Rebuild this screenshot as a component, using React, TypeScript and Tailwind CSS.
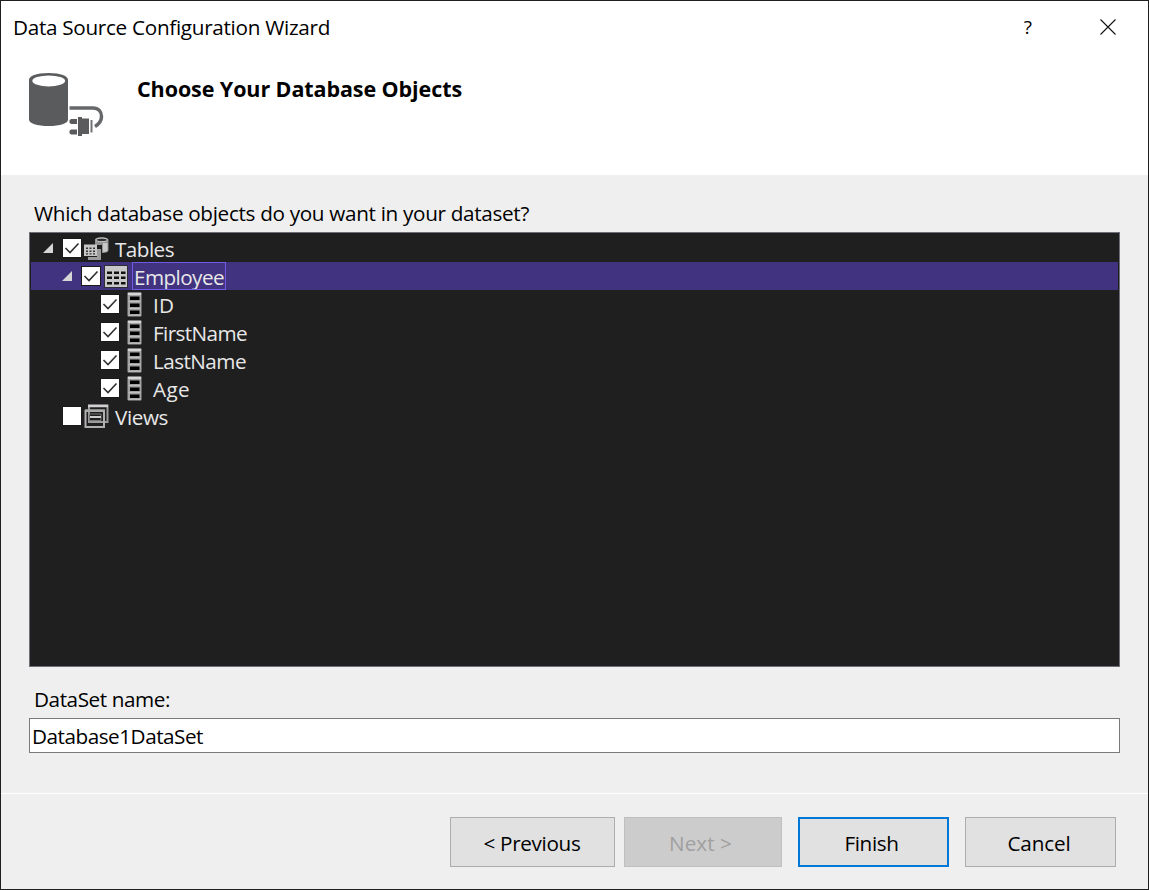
import React from "react";

type IconKind = "tables" | "table" | "column" | "views";

function Txt({ children, className = "", w }: { children: string; className?: string; w: number }) {
  const ref = React.useRef<HTMLSpanElement>(null);
  React.useLayoutEffect(() => {
    const el = ref.current;
    if (!el) return;
    el.style.letterSpacing = "0px";
    const natural = el.getBoundingClientRect().width;
    el.style.letterSpacing = `${(w - natural) / children.length}px`;
  }, [children, w]);
  return (
    <span ref={ref} className={`inline-block shrink-0 whitespace-pre ${className}`}>
      {children}
    </span>
  );
}

function DatabaseIcon() {
  return (
    <svg width="80" height="70" viewBox="26 70 80 70" fill="none" className="block">
      <path d="M29 80C29 76 36 73 48.500 73S68 76 68 80V119.500C68 123.500 60 126 48.500 126S29 123.500 29 119.500Z" fill="#595b5d" />
      <ellipse cx="48.700" cy="80.900" rx="16.400" ry="5.500" fill="#fff" />
      <path d="M69.500 108H93C98.500 108 101.500 111.500 101.500 116.500C101.500 121 99 124 95 126.500" stroke="#66686a" strokeWidth="3.500" />
      <path d="M71 119H77V124H71L69.500 122.700V120.300ZM71 129.500H77V134.500H71L69.500 133.200V130.800Z" fill="#595b5d" />
      <path d="M78 117H82V118.500H89V134H82V136H78Z" fill="#595b5d" />
      <path d="M91.500 120V132.500" stroke="#707274" strokeWidth="2" />
    </svg>
  );
}

function NodeIcon({ kind }: { kind: IconKind }) {
  if (kind === "column") {
    return (
      <svg width="15" height="25" viewBox="0 0 15 25" className="block">
        <rect x=".5" y=".3" width="14" height="24.200" rx="1" fill="#a3a3a3" />
        <rect x="1" y="1" width="13" height="2" fill="#d8d5d8" />
        <path d="M3 4.500H12.500V8H3ZM3 11.500H12.500V15H3ZM3 18.500H12.500V22H3Z" fill="#000" />
        <path d="M1.500 9.500H13.500M1.500 16.500H13.500M1.500 23.300H13.500" stroke="#c0c0c0" strokeWidth="1" />
      </svg>
    );
  }
  if (kind === "table") {
    return (
      <svg width="24" height="24" viewBox="0 0 24 24" className="block">
        <rect width="24" height="23" fill="#302c35" />
        <rect x="1" y="1" width="22" height="21" fill="#c8c8c8" />
        <path d="M3 6.500H8V9H3ZM10 6.500H15V9H10ZM17 6.500H21.500V9H17ZM3 11.500H8V14H3ZM10 11.500H15V14H10ZM17 11.500H21.500V14H17ZM3 17H8V19.500H3ZM10 17H15V19.500H10ZM17 17H21.500V19.500H17Z" fill="#111" />
      </svg>
    );
  }
  if (kind === "views") {
    return (
      <svg width="25" height="25" viewBox="0 0 25 25" fill="none" className="block">
        <path d="M5 1.500H23.500V18H5Z" stroke="#9b999b" strokeWidth="2" />
        <path d="M4 2H24" stroke="#d2cfd2" strokeWidth="2.500" />
        <path d="M1.500 7H20V23H1.500Z" stroke="#b3b0b3" strokeWidth="2" />
        <path d="M1 6.500H21" stroke="#aaa" strokeWidth="2.500" />
        <path d="M5.500 10H17V16.500H5.500Z" stroke="#777" />
        <path d="M6 13H17" stroke="#ccc" strokeWidth="2" />
      </svg>
    );
  }
  return (
    <svg width="25" height="25" viewBox="0 0 25 25" className="block">
      <path d="M11 3Q11 .3 17.500 .3T24.500 3V13Q24.500 16 18 16V8H11Z" fill="#929292" />
      <path d="M19 6H23.500V14Q22 15 19 15Z" fill="#c8c8c8" />
      <ellipse cx="17.700" cy="2.900" rx="5.800" ry="1.800" fill="#303030" stroke="#d5d5d5" />
      <path d="M4 20H13V12H17V23H4Z" fill="#9b9b9b" />
      <rect x="0" y="7.500" width="13" height="11.500" fill="#c6c6c6" />
      <path d="M2 10.500H4V12H2ZM5.500 10.500H7.500V12H5.500ZM9 10.500H11V12H9ZM2 13.500H4V15H2ZM5.500 13.500H7.500V15H5.500ZM9 13.500H11V15H9ZM2 16.300H4V17.600H2ZM5.500 16.300H7.500V17.600H5.500ZM9 16.300H11V17.600H9Z" fill="#333" />
    </svg>
  );
}

function Check({ checked }: { checked: boolean }) {
  return (
    <span className="mt-[5px] block size-[18px] shrink-0 bg-white outline outline-1 outline-[#1a1a1a]">
      {checked && (
        <svg width="18" height="18" viewBox="0 0 18 18" fill="none" className="block">
          <path d="M2.500 9L7 13.500L15.500 4.500" stroke="#303030" strokeWidth="1.600" />
        </svg>
      )}
    </span>
  );
}

interface Node {
  label: string;
  icon: IconKind;
  pad: string;
  iconPad: string;
  labelPad: string;
  width: number;
  checked: boolean;
  open?: boolean;
  selected?: boolean;
}

const nodes: Node[] = [
  { label: "Tables", icon: "tables", pad: "pl-[12px]", iconPad: "ml-[3px] mt-[3px]", labelPad: "ml-[6px]", width: 59, checked: true, open: true },
  { label: "Employee", icon: "table", pad: "pl-[31px]", iconPad: "ml-[4px] mt-[3px]", labelPad: "ml-[4px]", width: 90, checked: true, open: true, selected: true },
  { label: "ID", icon: "column", pad: "pl-[50px]", iconPad: "ml-[8px] mt-[2px]", labelPad: "ml-[11px]", width: 21, checked: true },
  { label: "FirstName", icon: "column", pad: "pl-[50px]", iconPad: "ml-[8px] mt-[2px]", labelPad: "ml-[11px]", width: 94, checked: true },
  { label: "LastName", icon: "column", pad: "pl-[50px]", iconPad: "ml-[8px] mt-[2px]", labelPad: "ml-[11px]", width: 93, checked: true },
  { label: "Age", icon: "column", pad: "pl-[50px]", iconPad: "ml-[8px] mt-[2px]", labelPad: "ml-[11px]", width: 37, checked: true },
  { label: "Views", icon: "views", pad: "pl-[12px]", iconPad: "ml-[3px] mt-[2px]", labelPad: "ml-[6px]", width: 53, checked: false },
];

function TreeRow({ node }: { node: Node }) {
  return (
    <div className={`flex h-[28px] items-start ${node.pad} ${node.selected ? "bg-[#41337f]" : ""}`}>
      <span className="mt-[9px] block h-[10px] w-[20px] shrink-0">
        {node.open && (
          <svg width="10" height="10" viewBox="0 0 10 10" className="block">
            <path d="M10 0V10H0Z" fill="#d6d6d6" />
          </svg>
        )}
      </span>
      <Check checked={node.checked} />
      <span className={`shrink-0 ${node.iconPad}`}>
        <NodeIcon kind={node.icon} />
      </span>
      <span className={`flex h-[28px] ${node.labelPad} ${node.selected ? "pl-[2px] pr-[2px] outline outline-1 -outline-offset-1 outline-[#6f5be0]" : ""}`}>
        <Txt w={node.width} className="pt-px leading-[28px] text-[#e8e8e8]">{node.label}</Txt>
      </span>
    </div>
  );
}

function Button({ label, width, className }: { label: string; width: number; className: string }) {
  return (
    <button className={`flex h-[50px] items-center justify-center pt-px ${className}`}>
      <Txt w={width}>{label}</Txt>
    </button>
  );
}

export default function App() {
  return (
    <div className="flex h-[890px] w-[1149px] flex-col border border-[#1f1f1f] bg-[#efefef] font-['Open_Sans','Noto_Sans',sans-serif] text-[20.7px] font-[370] leading-[28px] text-black">
      <header className="h-[174px] shrink-0 bg-white">
        <div className="flex h-[52px] items-start justify-between pl-[12px] pr-[32px] pt-[12px]">
          <Txt w={317}>Data Source Configuration Wizard</Txt>
          <div className="flex items-start gap-[68px]">
            <span className="text-[19px] leading-[28px]">?</span>
            <svg width="16" height="16" viewBox="0 0 16 16" fill="none" className="mt-[6px] block">
              <path d="M.5 .5L15.500 15.500M15.500 .5L.5 15.500" stroke="#111" strokeWidth="1.100" />
            </svg>
          </div>
        </div>
        <div className="flex items-start pl-[25px] pt-[17px]">
          <DatabaseIcon />
          <h1 className="ml-[31px] mt-[5px] flex text-[21.5px] font-bold">
            <Txt w={325}>Choose Your Database Objects</Txt>
          </h1>
        </div>
      </header>
      <main className="flex h-[618px] shrink-0 flex-col px-[28px] pt-[24px]">
        <div className="flex h-[33px] shrink-0 pl-[5px]">
          <Txt w={495}>Which database objects do you want in your dataset?</Txt>
        </div>
        <div className="h-[435px] shrink-0 border border-[#6e7079] bg-[#1f1f1f] p-px">
          {nodes.map((node) => (
            <TreeRow key={node.label} node={node} />
          ))}
        </div>
        <div className="mt-[18px] flex h-[33px] shrink-0 pl-[5px]">
          <Txt w={136}>DataSet name:</Txt>
        </div>
        <div className="flex h-[35px] shrink-0 items-start border border-[#7a7a7a] bg-white pl-[2px] pt-[3px]">
          <Txt w={171}>Database1DataSet</Txt>
        </div>
      </main>
      <footer className="flex grow items-start border-t border-white pl-[449px] pt-[23px]">
        <Button label="< Previous" width={97} className="w-[165px] border border-[#adadad] bg-[#e1e1e1] pr-px" />
        <Button label="Next >" width={63} className="ml-[9px] w-[158px] border border-[#bfbfbf] bg-[#cccccc] pr-[5px] text-[#a0a0a0]" />
        <Button label="Finish" width={54} className="ml-[16px] w-[151px] border-2 border-[#0078d7] bg-[#e1e1e1] pr-[4px]" />
        <Button label="Cancel" width={63} className="ml-[16px] w-[151px] border border-[#adadad] bg-[#e1e1e1] pr-[3px]" />
      </footer>
    </div>
  );
}
